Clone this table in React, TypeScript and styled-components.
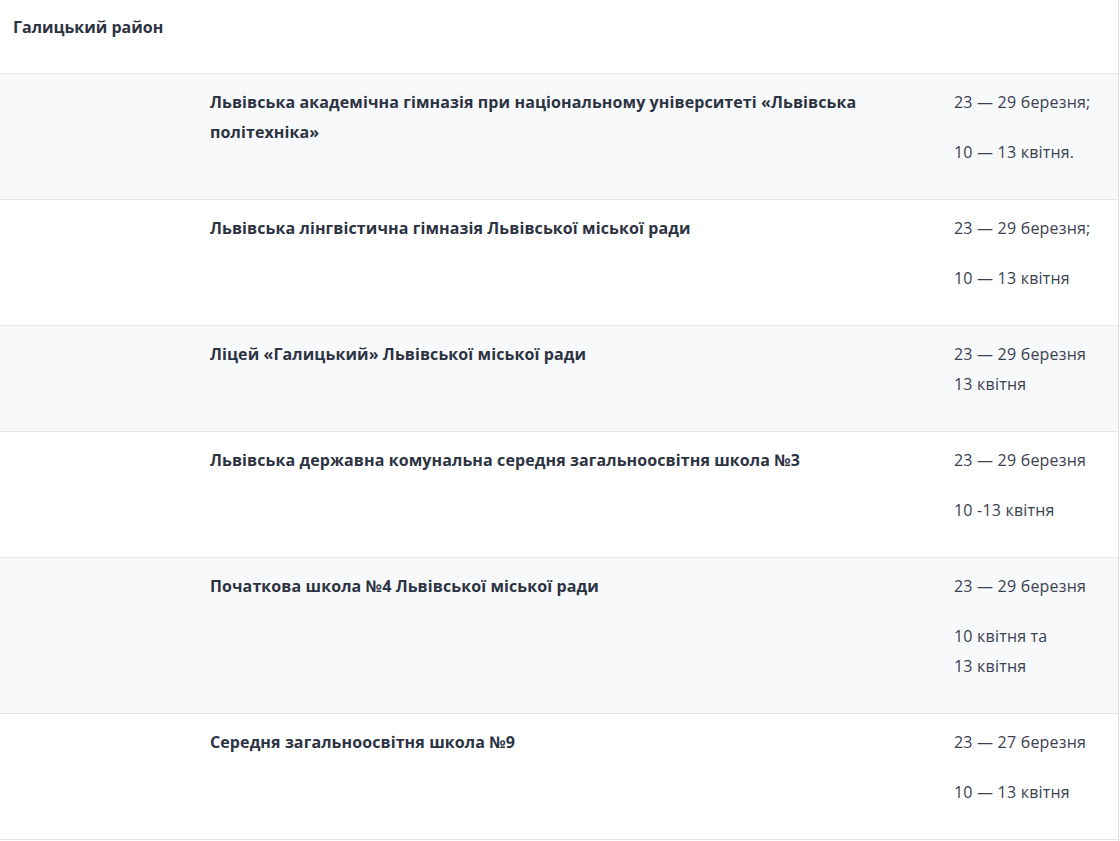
import React from "react";
import styled, { createGlobalStyle } from "styled-components";

const Global = createGlobalStyle`
  html, body { margin: 0; padding: 0; background: #fff; }
  body { font-family: "Open Sans", "Noto Sans", sans-serif; color: #2c3342; }
`;

const Page = styled.div`
  width: 1118px;
  border-right: 1px solid #dfe1e5;
  min-height: 841px;
`;

const Header = styled.div`
  height: 74px;
  border-bottom: 1px solid #e3e5e8;
  padding: 12px 13px 0;
  box-sizing: border-box;
  font-size: 16px;
  line-height: 30px;
  font-weight: 700;
  color: #2c3342;
`;

const Row = styled.div<{ $shaded: boolean }>`
  display: grid;
  grid-template-columns: 197px 744px 1fr;
  background: ${(p) => (p.$shaded ? "#f8f9fb" : "#fff")};
  border-bottom: 1px solid #e3e5e8;
`;

const Cell = styled.div`
  padding: 13px 13px 12px;
  font-size: 16px;
  line-height: 30px;
`;

const Name = styled(Cell)`
  font-weight: 700;
  color: #2c3342;
  letter-spacing: 0.1px;
`;

const Dates = styled(Cell)`
  color: #3a4150;
  letter-spacing: 0.2px;
`;

const Para = styled.p`
  margin: 0 0 20px;
`;

type School = { name: string; dates: string[][] };

const schools: School[] = [
  {
    name: "Львівська академічна гімназія при національному університеті «Львівська політехніка»",
    dates: [["23 — 29 березня;"], ["10 — 13 квітня."]],
  },
  {
    name: "Львівська лінгвістична гімназія Львівської міської ради",
    dates: [["23 — 29 березня;"], ["10 — 13 квітня"]],
  },
  {
    name: "Ліцей «Галицький» Львівської міської ради",
    dates: [["23 — 29 березня", "13 квітня"]],
  },
  {
    name: "Львівська державна комунальна середня загальноосвітня школа №3",
    dates: [["23 — 29 березня"], ["10 -13 квітня"]],
  },
  {
    name: "Початкова школа №4 Львівської міської ради",
    dates: [["23 — 29 березня"], ["10 квітня та", "13 квітня"]],
  },
  {
    name: "Середня загальноосвітня школа №9",
    dates: [["23 — 27 березня"], ["10 — 13 квітня"]],
  },
];

export default function App() {
  return (
    <>
      <Global />
      <Page>
        <Header>Галицький район</Header>
        {schools.map((s, i) => (
          <Row key={i} $shaded={i % 2 === 0}>
            <Cell />
            <Name>{s.name}</Name>
            <Dates>
              {s.dates.map((p, j) => (
                <Para key={j}>
                  {p.map((line, k) => (
                    <React.Fragment key={k}>
                      {k > 0 && <br />}
                      {line}
                    </React.Fragment>
                  ))}
                </Para>
              ))}
            </Dates>
          </Row>
        ))}
      </Page>
    </>
  );
}
